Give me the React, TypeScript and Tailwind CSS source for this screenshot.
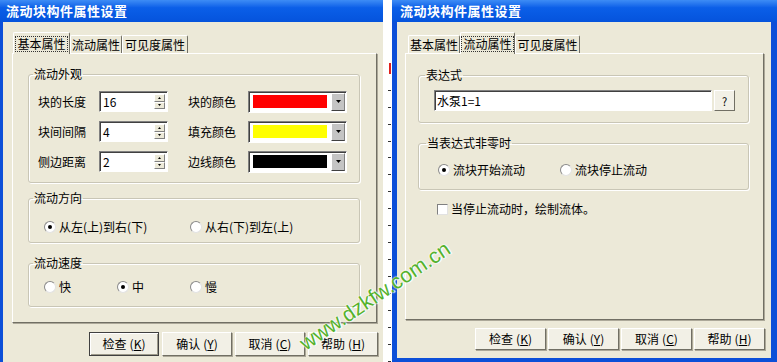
import React from "react";

const DlgTitle = ({ text, pl }: { text: string; pl: string }) => (
  <div
    className={`h-[22px] shrink-0 flex items-center ${pl} bg-linear-to-b from-[#3d8cf5] via-[#0b5fe8] via-35% to-[#0553dc] text-white font-bold text-[13px] tracking-[0.5px]`}
  >
    {text}
  </div>
);

const Tab = ({ label, active, w }: { label: string; active?: boolean; w: string }) =>
  active ? (
    <div
      className={`${w} h-[22px] -mb-px relative z-10 flex items-center justify-center bg-[#ece9d8] border border-b-0 border-t-[#fff] border-l-[#fff] border-r-[#716f64] rounded-t-[2px]`}
    >
      <span className="border border-dotted border-[#333] px-[1px] leading-[14px]">{label}</span>
    </div>
  ) : (
    <div
      className={`${w} h-[18px] flex items-center justify-center bg-[#ece9d8] border border-b-0 border-t-[#fff] border-l-[#fff] border-r-[#716f64] rounded-t-[2px]`}
    >
      {label}
    </div>
  );

const Arrow = ({ up, size = "w-[5px] h-[3px]" }: { up?: boolean; size?: string }) => (
  <svg viewBox="0 0 5 3" className={size}>
    <path d={up ? "M0 3 L2.5 0 L5 3 Z" : "M0 0 L5 0 L2.5 3 Z"} fill="#000" />
  </svg>
);

const SpinBtn = ({ up }: { up?: boolean }) => (
  <div className="flex-1 flex items-center justify-center bg-[#ece9d8] border border-t-white border-l-white border-r-[#808080] border-b-[#808080]">
    <Arrow up={up} size="w-[3px] h-[2px]" />
  </div>
);

const Spin = ({ value }: { value: string }) => (
  <div className="w-[69px] h-[21px] flex bg-white border border-t-[#808080] border-l-[#808080] border-r-white border-b-white shadow-[inset_1px_1px_0_#404040]">
    <span className="flex-1 pl-[3px] pt-[1px] leading-[18px]">{value}</span>
    <div className="w-[13px] flex flex-col py-[2px] pr-[2px]">
      <SpinBtn up />
      <SpinBtn />
    </div>
  </div>
);

const ColorCombo = ({ color }: { color: string }) => (
  <div className="w-[99px] h-[22px] flex bg-white border border-t-[#808080] border-l-[#808080] border-r-white border-b-white shadow-[inset_1px_1px_0_#404040] pl-[4px] pr-[1px]">
    <div className={`w-[75px] h-[13px] mt-[3px] ${color}`} />
    <div className="ml-[4px] w-[14px] my-[1px] flex items-center justify-center bg-[#c4c4c4] border border-t-white border-l-white border-r-[#808080] border-b-[#404040]">
      <Arrow />
    </div>
  </div>
);

const Radio = ({ label, checked, w }: { label: string; checked?: boolean; w?: string }) => (
  <div className={`flex items-center h-[14px] ${w ?? ""}`}>
    <span className="w-[12px] h-[12px] shrink-0 rounded-full bg-white border border-t-[#8a8a8a] border-l-[#8a8a8a] border-r-[#e2e2e2] border-b-[#e2e2e2] flex items-center justify-center">
      {checked && <span className="w-[4px] h-[4px] rounded-full bg-black" />}
    </span>
    <span className="ml-[3px]">{label}</span>
  </div>
);

// group box: padding goes on the inner div so the legend keeps its own place
const Group = ({
  title,
  className,
  inner,
  lg = "ml-[4px]",
  children,
}: {
  title: string;
  className: string;
  inner: string;
  lg?: string;
  children: React.ReactNode;
}) => (
  <fieldset className={`border border-[#c9c6b6] rounded-[3px] shadow-[1px_1px_0_#fff,inset_1px_1px_0_#fff] ${className}`}>
    <legend className={`${lg} px-[1px] leading-[14px]`}>{title}</legend>
    <div className={inner}>{children}</div>
  </fieldset>
);

const Btn = ({ label, k, w, h, def }: { label: string; k: string; w: string; h: string; def?: boolean }) => (
  <div
    className={`${w} ${h} flex items-center justify-center bg-[#f2f0e6] border ${
      def
        ? "border-[#404040] shadow-[inset_1px_1px_0_#fff,inset_-1px_-1px_0_#9d9a8a]"
        : "border-t-white border-l-white border-r-[#716f64] border-b-[#716f64] shadow-[1px_1px_0_#aca899]"
    }`}
  >
    {label}
    <span className="ml-[3px]">
      (<u>{k}</u>)
    </span>
  </div>
);

const ColorRow = ({ label, value, label2, color }: { label: string; value: string; label2: string; color: string }) => (
  <div className="flex items-center h-[21px]">
    <span className="w-[61px]">{label}</span>
    <Spin value={value} />
    <span className="ml-[20px] w-[60px]">{label2}</span>
    <ColorCombo color={color} />
  </div>
);

const BasicDialog = () => (
  <div className="w-[383px] h-[362px] shrink-0 flex flex-col bg-[#ece9d8]">
    <DlgTitle text="流动块构件属性设置" pl="pl-[6px]" />
    <div className="flex-1 border-l-[3px] border-[#0c4fd8] pl-[9px]">
      <div className="mt-[10px] h-[21px] flex items-end pl-[1px]">
        <Tab label="基本属性" active w="w-[57px]" />
        <Tab label="流动属性" w="w-[52px]" />
        <Tab label="可见度属性" w="w-[66px]" />
      </div>
      <div className="w-[365px] h-[270px] border border-t-white border-l-white border-r-[#716f64] border-b-[#716f64] shadow-[1px_1px_0_#aca899] pt-[13px] pl-[15px]">
        <Group title="流动外观" className="w-[332px]" inner="pt-[10px] pb-[10px] pl-[9px] flex flex-col gap-[9px]">
          <ColorRow label="块的长度" value="16" label2="块的颜色" color="bg-[#ff0000]" />
          <ColorRow label="块间间隔" value="4" label2="填充颜色" color="bg-[#ffff00]" />
          <ColorRow label="侧边距离" value="2" label2="边线颜色" color="bg-[#000000]" />
        </Group>
        <Group title="流动方向" className="w-[332px] mt-[8px]" inner="pt-[15px] pb-[8px] pl-[15px] flex">
          <Radio label="从左(上)到右(下)" checked w="w-[146px]" />
          <Radio label="从右(下)到左(上)" />
        </Group>
        <Group title="流动速度" className="w-[332px] mt-[13px]" inner="pt-[10px] pb-[12px] pl-[15px] flex">
          <Radio label="快" w="w-[73px]" />
          <Radio label="中" checked w="w-[73px]" />
          <Radio label="慢" />
        </Group>
      </div>
      <div className="w-[366px] mt-[9px] flex justify-end gap-[3px]">
        <Btn label="检查" k="K" w="w-[70px]" h="h-[24px]" def />
        <Btn label="确认" k="Y" w="w-[70px]" h="h-[24px]" />
        <Btn label="取消" k="C" w="w-[70px]" h="h-[24px]" />
        <Btn label="帮助" k="H" w="w-[70px]" h="h-[24px]" />
      </div>
    </div>
  </div>
);

const FlowDialog = () => (
  <div className="w-[385px] h-[362px] shrink-0 flex flex-col bg-[#ece9d8]">
    <DlgTitle text="流动块构件属性设置" pl="pl-[8px]" />
    <div className="flex-1 border-l-[5px] border-r-[6px] border-b-[4px] border-[#0c4fd8] pl-[8px]">
      <div className="mt-[10px] h-[21px] flex items-end pl-[3px]">
        <Tab label="基本属性" w="w-[52px]" />
        <Tab label="流动属性" active w="w-[55px]" />
        <Tab label="可见度属性" w="w-[65px]" />
      </div>
      <div className="w-[359px] h-[267px] border border-t-white border-l-white border-r-[#716f64] border-b-[#716f64] shadow-[1px_1px_0_#aca899] pt-[14px] pl-[12px]">
        <Group title="表达式" lg="ml-[6px]" className="w-[331px]" inner="pt-[8px] pb-[11px] pl-[15px] flex items-center">
          <div className="w-[278px] h-[21px] bg-white border border-t-[#808080] border-l-[#808080] border-r-white border-b-white shadow-[inset_1px_1px_0_#404040] pl-[2px] leading-[19px]">
            水泵1=1
          </div>
          <div className="ml-[2px] w-[21px] h-[21px] flex items-center justify-center bg-[#f2f0e6] border border-t-white border-l-white border-r-[#716f64] border-b-[#716f64] text-[11px]">
            ?
          </div>
        </Group>
        <Group title="当表达式非零时" lg="ml-[7px]" className="w-[331px] mt-[13px]" inner="pt-[13px] pb-[12px] pl-[19px] flex">
          <Radio label="流块开始流动" checked w="w-[122px]" />
          <Radio label="流块停止流动" />
        </Group>
        <div className="mt-[12px] ml-[19px] h-[14px] flex items-center">
          <span className="w-[11px] h-[11px] bg-white border border-t-[#808080] border-l-[#808080] border-r-[#e2e2e2] border-b-[#e2e2e2]" />
          <span className="ml-[3px]">当停止流动时，绘制流体。</span>
        </div>
      </div>
      <div className="w-[360px] mt-[8px] flex justify-end gap-[2px]">
        <Btn label="检查" k="K" w="w-[71px]" h="h-[22px]" />
        <Btn label="确认" k="Y" w="w-[71px]" h="h-[22px]" />
        <Btn label="取消" k="C" w="w-[71px]" h="h-[22px]" />
        <Btn label="帮助" k="H" w="w-[71px]" h="h-[22px]" />
      </div>
    </div>
  </div>
);

const App = () => {
  const ticks = Array.from({ length: 17 });
  return (
    <div className="relative w-[777px] h-[362px] overflow-hidden bg-white flex text-[12px] leading-[14px] text-black font-['Noto_Sans_CJK_SC',sans-serif]">
      <BasicDialog />
      <div className="w-[9px] shrink-0 flex flex-col pt-[63px] gap-[16px] items-end pr-[1px]">
        <div className="w-[2px] h-[11px] bg-[#e0201c]" />
        {ticks.map((_, i) => (
          <div key={i} className="w-[3px] h-px bg-[#333]" />
        ))}
      </div>
      <FlowDialog />
      <div className="absolute left-[285px] top-[284px] w-[180px] text-center -rotate-[34deg] text-[21px] leading-[24px] text-[#55b22d] font-['Liberation_Sans',sans-serif] [text-shadow:0_0_2px_#fff,0_0_2px_#fff,1px_1px_1px_#fff]">
        www.dzkfw.com.cn
      </div>
    </div>
  );
};

export default App;
